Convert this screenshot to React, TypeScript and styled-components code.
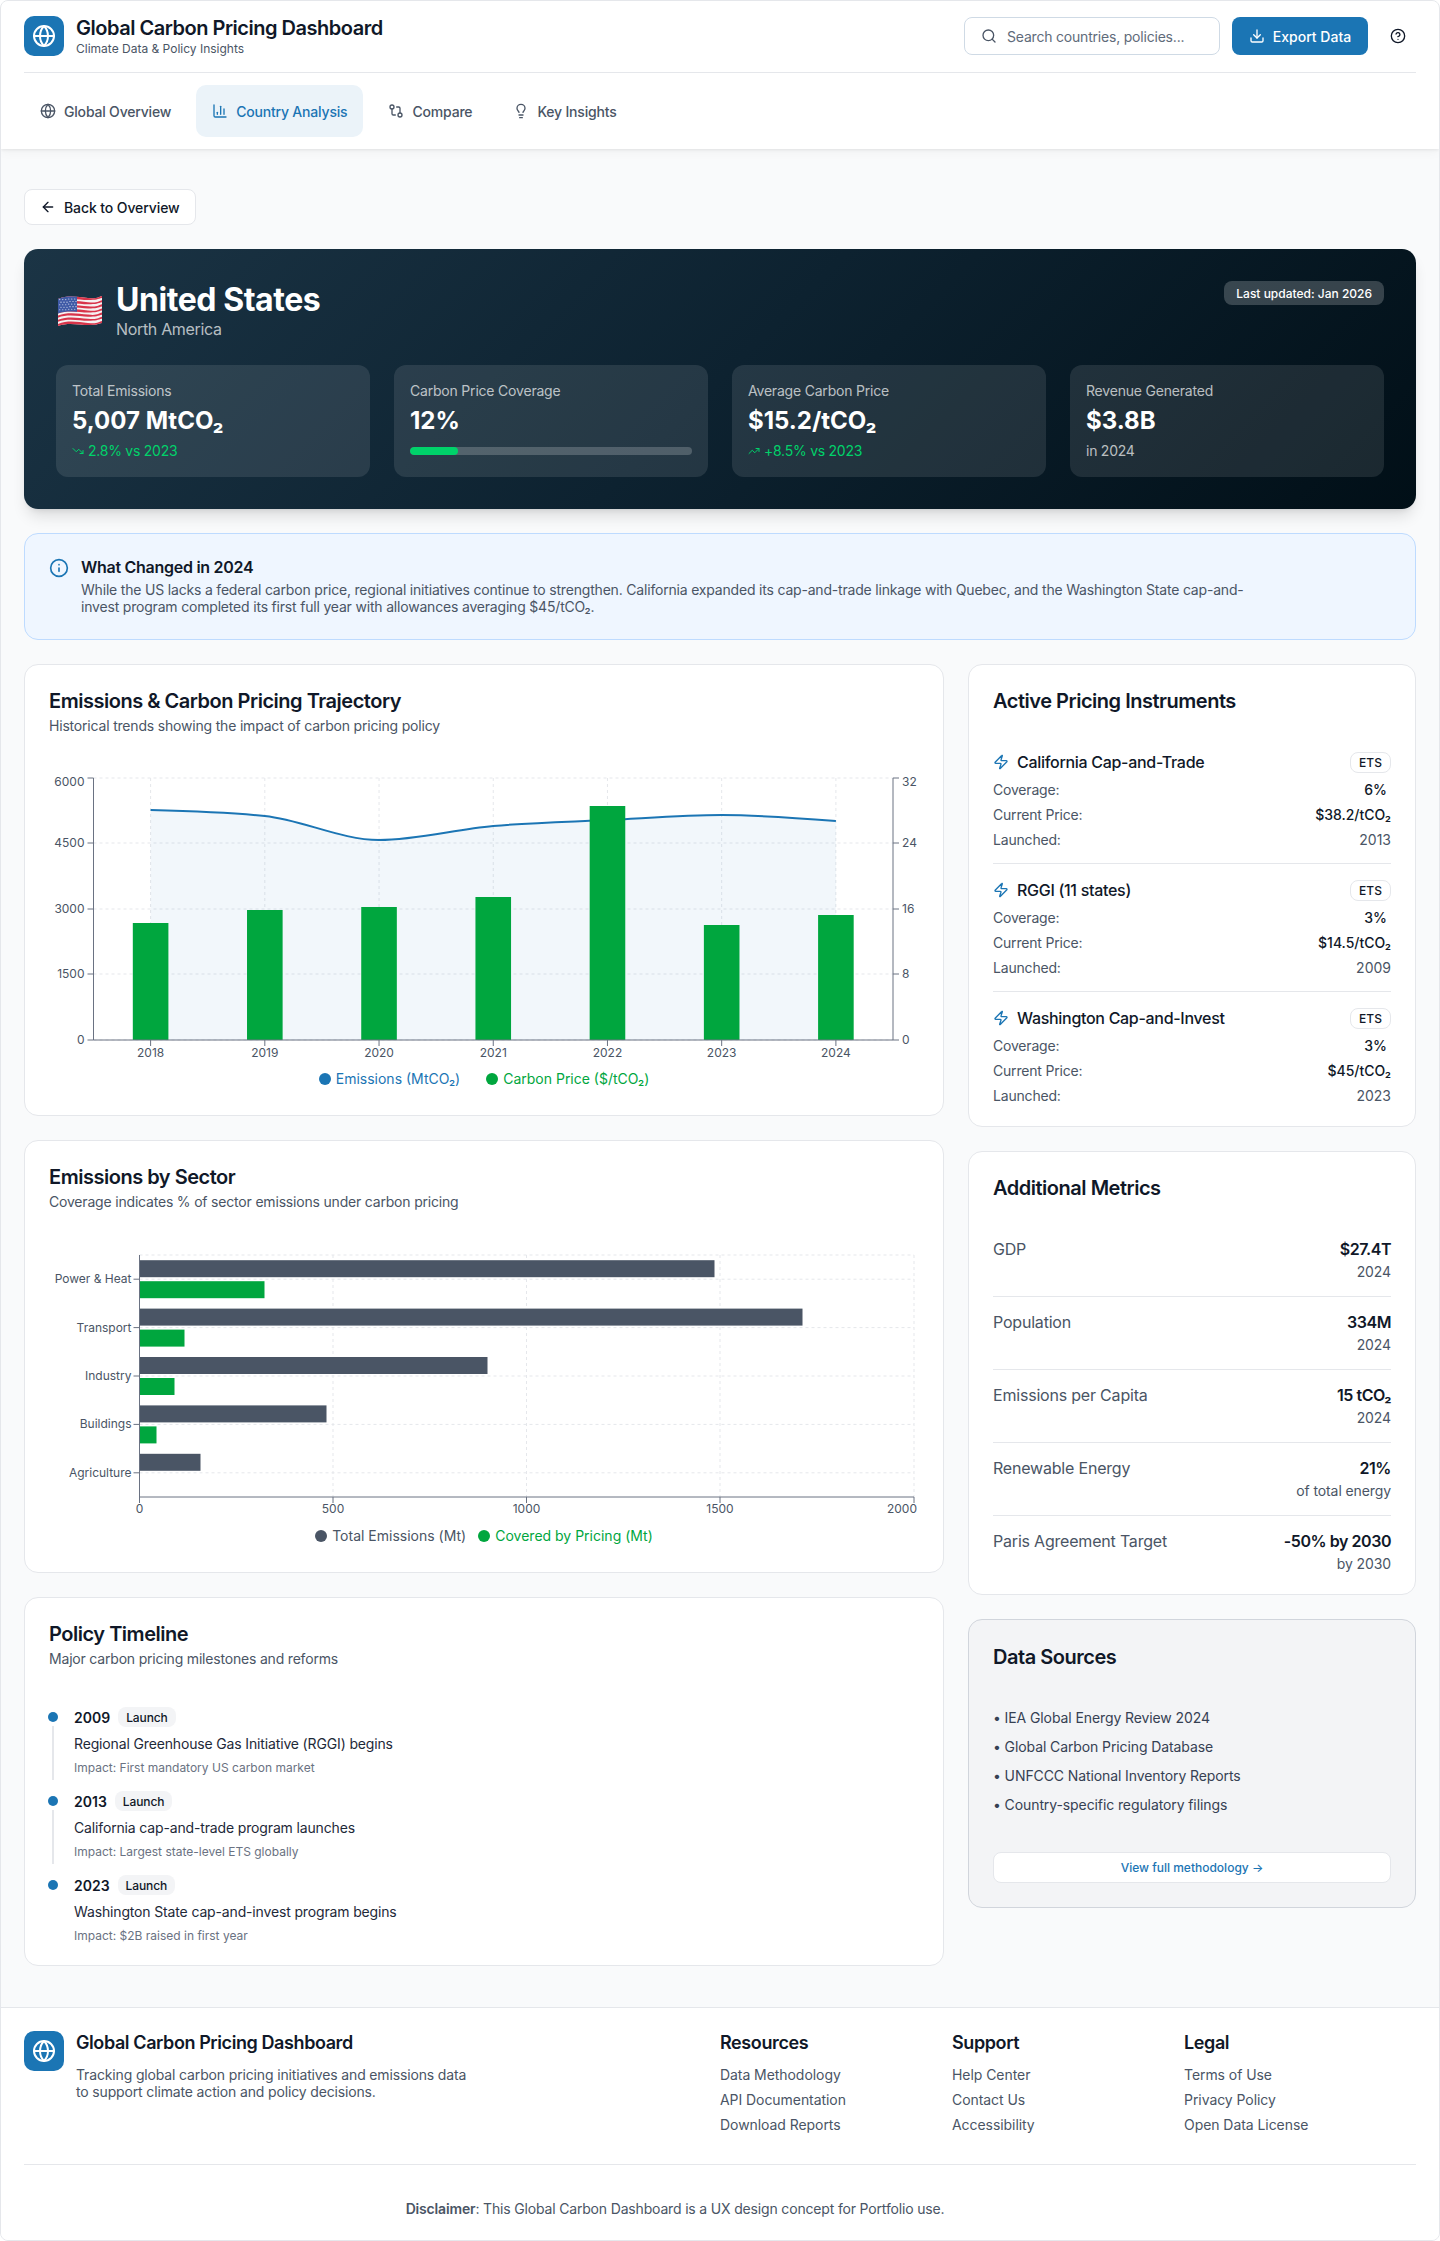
import React from "react";
import styled, { createGlobalStyle } from "styled-components";
import {
  ArrowLeft,
  ChartColumn,
  CircleHelp,
  Download,
  GitCompare,
  Globe,
  Info,
  Lightbulb,
  Search,
  TrendingDown,
  TrendingUp,
  Zap,
} from "lucide-react";

const PRIMARY = "#1b75b4";
const GREEN = "#00a63e";
const SLATE = "#4a5565";
const AXIS = "#6a7282";
const GRID = "#e5e7eb";

const GlobalStyle = createGlobalStyle`
  html, body { margin: 0; padding: 0; background: #fff; }
  * { box-sizing: border-box; }
  body {
    font-family: Inter, "Liberation Sans", sans-serif;
    color: #101828;
  }
`;

const Root = styled.div`
  border: 1px solid #e5e7eb;
  border-radius: 8px;
  overflow: hidden;
  background: #f9fafb;
`;

const Header = styled.header`
  position: relative;
  z-index: 2;
  background: #fff;
  padding: 15px 23px 0;
  box-shadow: 0 1px 3px rgba(0, 0, 0, 0.08), 0 4px 10px rgba(0, 0, 0, 0.03);
`;

const TopRow = styled.div`
  display: flex;
  justify-content: space-between;
  align-items: center;
  padding-bottom: 16px;
  border-bottom: 1px solid #e5e7eb;
`;

const Brand = styled.div`
  display: flex;
  gap: 12px;
`;

const LogoMark = styled.div`
  width: 40px;
  height: 40px;
  border-radius: 10px;
  background: ${PRIMARY};
  color: #fff;
  display: flex;
  align-items: center;
  justify-content: center;
  flex: none;
`;

const BrandTitle = styled.div`
  font-size: 20px;
  line-height: 24px;
  font-weight: 600;
  letter-spacing: -0.48px;
  color: #101828;
`;

const BrandSub = styled.div`
  margin-top: 1px;
  font-size: 12px;
  line-height: 15px;
  color: ${SLATE};
`;

const Actions = styled.div`
  display: flex;
  align-items: center;
  gap: 12px;
`;

const SearchBox = styled.label`
  width: 256px;
  height: 38px;
  display: flex;
  align-items: center;
  gap: 10px;
  padding: 0 16px;
  background: #fff;
  border: 1px solid #cfdae5;
  border-radius: 8px;
  color: ${SLATE};
`;

const SearchInput = styled.input`
  flex: 1;
  min-width: 0;
  border: 0;
  outline: 0;
  padding: 0;
  background: transparent;
  font: 400 14px Inter, "Liberation Sans", sans-serif;
  letter-spacing: -0.2px;
  &::placeholder { color: #5f6b7a; opacity: 1; }
`;

const ExportButton = styled.button`
  width: 136px;
  height: 38px;
  display: flex;
  align-items: center;
  justify-content: center;
  gap: 8px;
  border: 0;
  border-radius: 8px;
  background: ${PRIMARY};
  color: #fff;
  font: 500 14px Inter, "Liberation Sans", sans-serif;
`;

const IconButton = styled.button`
  width: 36px;
  height: 36px;
  display: flex;
  align-items: center;
  justify-content: center;
  border: 0;
  padding: 0;
  background: transparent;
  color: #101828;
`;

const Nav = styled.nav`
  display: flex;
  gap: 9px;
  padding: 12px 0;
`;

const Tab = styled.a<{ $active?: boolean }>`
  height: 52px;
  display: flex;
  align-items: center;
  gap: 8px;
  padding: 0 16px;
  border-radius: 10px;
  font-size: 14px;
  font-weight: 500;
  letter-spacing: -0.19px;
  background: ${(p) => (p.$active ? "#ebf3f9" : "transparent")};
  color: ${(p) => (p.$active ? PRIMARY : SLATE)};
`;

const Main = styled.main`
  padding: 40px 23px 41px;
  display: flex;
  flex-direction: column;
  align-items: stretch;
  gap: 24px;
`;

const BackButton = styled.button`
  align-self: flex-start;
  width: 172px;
  height: 36px;
  display: flex;
  align-items: center;
  gap: 8px;
  padding: 0 15px;
  white-space: nowrap;
  background: #fff;
  border: 1px solid #e5e7eb;
  border-radius: 8px;
  color: #101828;
  font: 500 14px Inter, "Liberation Sans", sans-serif;
  letter-spacing: -0.1px;
`;

const Hero = styled.section`
  height: 260px;
  padding: 32px;
  border-radius: 14px;
  color: #fff;
  background: linear-gradient(135deg, #1b3445 0%, #0d2230 50%, #010f17 100%);
  box-shadow: 0 10px 15px -3px rgba(0, 0, 0, 0.12), 0 4px 6px -4px rgba(0, 0, 0, 0.12);
`;

const HeroHead = styled.div`
  display: flex;
  justify-content: space-between;
  align-items: flex-start;
  margin-bottom: 26px;
`;

const HeroTitleGroup = styled.div`
  display: flex;
  align-items: center;
  gap: 12px;
`;

const FlagSlot = styled.div`
  width: 48px;
  height: 31px;
  padding-left: 2px;
  margin-top: 3px;
`;

const HeroTitle = styled.h1`
  margin: 0;
  padding-top: 3px;
  font-size: 32px;
  line-height: 32px;
  font-weight: 700;
  letter-spacing: -0.44px;
`;

const HeroSub = styled.div`
  margin-top: 3px;
  font-size: 16px;
  line-height: 20px;
  letter-spacing: -0.33px;
  color: rgba(255, 255, 255, 0.7);
`;

const UpdatedBadge = styled.div`
  height: 24px;
  display: flex;
  align-items: center;
  padding: 0 12px;
  border-radius: 8px;
  font-size: 12px;
  font-weight: 500;
  background: rgba(255, 255, 255, 0.2);
`;

const StatGrid = styled.div`
  display: grid;
  grid-template-columns: repeat(4, 1fr);
  gap: 24px;
`;

const StatCard = styled.div`
  height: 112px;
  padding: 16px;
  border-radius: 12px;
  background: rgba(255, 255, 255, 0.1);
`;

const StatLabel = styled.div`
  font-size: 14px;
  line-height: 20px;
  letter-spacing: -0.2px;
  color: rgba(255, 255, 255, 0.7);
`;

const StatValue = styled.div`
  margin-top: 4px;
  font-size: 24px;
  line-height: 32px;
  font-weight: 700;
`;

const StatNote = styled.div<{ $positive?: boolean }>`
  margin-top: 4px;
  display: flex;
  align-items: center;
  gap: 4px;
  font-size: 14px;
  line-height: 20px;
  letter-spacing: -0.25px;
  color: ${(p) => (p.$positive ? "#00d26a" : "rgba(255, 255, 255, 0.7)")};
`;

const ProgressTrack = styled.div`
  margin-top: 10px;
  height: 8px;
  border-radius: 4px;
  overflow: hidden;
  background: rgba(255, 255, 255, 0.2);
`;

const ProgressFill = styled.div`
  height: 100%;
  border-radius: 4px;
  background: #00d26a;
`;

const InfoBox = styled.section`
  display: flex;
  gap: 12px;
  padding: 24px;
  background: #eff6ff;
  border: 1px solid #bedbff;
  border-radius: 14px;
  color: ${PRIMARY};
`;

const InfoTitle = styled.div`
  font-size: 16px;
  line-height: 19px;
  font-weight: 600;
  letter-spacing: -0.28px;
  color: #101828;
`;

const InfoText = styled.p`
  margin: 4px 0 0;
  max-width: 1180px;
  font-size: 14px;
  line-height: 17px;
  letter-spacing: -0.19px;
  color: ${SLATE};
`;

const ContentGrid = styled.div`
  display: grid;
  grid-template-columns: minmax(0, 1fr) 448px;
  gap: 24px;
  align-items: start;
`;

const Column = styled.div`
  display: flex;
  flex-direction: column;
  gap: 24px;
`;

const Card = styled.section<{ $muted?: boolean; $tight?: boolean }>`
  padding: ${(p) => (p.$muted ? "25px" : "24px")} 24px ${(p) => (p.$tight ? "22px" : "24px")};
  background: ${(p) => (p.$muted ? "#f3f4f6" : "#fff")};
  border: 1px solid ${(p) => (p.$muted ? "#d1d5dc" : "#e5e7eb")};
  border-radius: 14px;
`;

const CardTitle = styled.h2`
  margin: 0;
  font-size: 20px;
  line-height: 24px;
  font-weight: 600;
  letter-spacing: -0.48px;
  color: #101828;
`;

const CardSub = styled.p`
  margin: 4px 0 0;
  font-size: 14px;
  line-height: 17px;
  letter-spacing: -0.19px;
  color: ${SLATE};
`;

const ChartFrame = styled.div<{ $height: number }>`
  height: ${(p) => p.$height}px;
  margin-top: 24px;
`;

const ChartSvg = styled.svg`
  display: block;
`;

const AxisLabel = styled.text`
  font-family: Inter, "Liberation Sans", sans-serif;
  font-size: 12px;
  fill: ${SLATE};
`;

const Legend = styled.div<{ $gap: number; $top: number }>`
  display: flex;
  justify-content: center;
  gap: ${(p) => p.$gap}px;
  margin-top: ${(p) => p.$top}px;
`;

const LegendItem = styled.div<{ $color: string }>`
  display: flex;
  align-items: center;
  gap: 5px;
  font-size: 14px;
  line-height: 17px;
  color: ${(p) => p.$color};
`;

const LegendDot = styled.span<{ $color: string }>`
  width: 12px;
  height: 12px;
  border-radius: 50%;
  background: ${(p) => p.$color};
`;

const Timeline = styled.div`
  margin-top: 40px;
`;

const TimelineItem = styled.div<{ $last?: boolean }>`
  display: flex;
  gap: 16px;
  padding-bottom: ${(p) => (p.$last ? 0 : 16)}px;
`;

const Rail = styled.div`
  width: 10px;
  margin-left: -1px;
  padding-top: 5px;
  display: flex;
  flex-direction: column;
  align-items: center;
  flex: none;
`;

const RailDot = styled.span`
  width: 10px;
  height: 10px;
  border-radius: 50%;
  background: ${PRIMARY};
  flex: none;
`;

const RailLine = styled.span`
  flex: 1;
  width: 2px;
  margin: 4px 0 -5px;
  background: #e5e7eb;
`;

const TimelineHead = styled.div`
  display: flex;
  align-items: center;
  gap: 8px;
  height: 20px;
`;

const TimelineYear = styled.span`
  font-size: 14px;
  font-weight: 600;
  color: #101828;
`;

const TimelineBadge = styled.span`
  height: 20px;
  display: flex;
  align-items: center;
  padding: 0 8px;
  border-radius: 8px;
  background: #f3f4f6;
  font-size: 12px;
  font-weight: 500;
  letter-spacing: -0.1px;
  color: #101828;
`;

const TimelineText = styled.div`
  margin-top: 8px;
  font-size: 14px;
  line-height: 17px;
  letter-spacing: -0.15px;
  color: #1e2939;
`;

const TimelineImpact = styled.div`
  margin-top: 8px;
  font-size: 12px;
  line-height: 15px;
  color: #6a7282;
`;

const Instruments = styled.div`
  margin-top: 39px;
`;

const Instrument = styled.div<{ $last?: boolean }>`
  display: flex;
  flex-direction: column;
  gap: 8px;
  padding-bottom: ${(p) => (p.$last ? 0 : 15)}px;
  margin-bottom: ${(p) => (p.$last ? 0 : 16)}px;
  border-bottom: ${(p) => (p.$last ? "0" : "1px solid #e5e7eb")};
`;

const InstrumentHead = styled.div`
  display: flex;
  justify-content: space-between;
  align-items: center;
  height: 21px;
`;

const InstrumentName = styled.div`
  display: flex;
  align-items: center;
  gap: 8px;
  margin-top: -2px;
  font-size: 16px;
  font-weight: 500;
  letter-spacing: -0.3px;
  color: #101828;
  svg { color: ${PRIMARY}; }
`;

const TypeBadge = styled.span`
  height: 21px;
  width: 41px;
  display: flex;
  align-items: center;
  justify-content: center;
  border: 1px solid #e5e7eb;
  border-radius: 8px;
  font-size: 12px;
  font-weight: 500;
  color: #101828;
`;

const SpecRow = styled.div`
  display: flex;
  justify-content: space-between;
  font-size: 14px;
  line-height: 17px;
  letter-spacing: -0.19px;
  color: ${SLATE};
`;

const SpecValue = styled.span<{ $strong?: boolean; $inset?: boolean }>`
  font-weight: ${(p) => (p.$strong ? 500 : 400)};
  letter-spacing: 0;
  color: ${(p) => (p.$strong ? "#101828" : SLATE)};
  padding-right: ${(p) => (p.$inset ? 4 : 0)}px;
`;

const Metrics = styled.div`
  margin-top: 40px;
`;

const Metric = styled.div<{ $last?: boolean }>`
  display: flex;
  justify-content: space-between;
  align-items: flex-start;
  padding-bottom: ${(p) => (p.$last ? 0 : 16)}px;
  margin-bottom: ${(p) => (p.$last ? 0 : 16)}px;
  border-bottom: ${(p) => (p.$last ? "0" : "1px solid #e5e7eb")};
`;

const MetricLabel = styled.div`
  font-size: 16px;
  line-height: 19px;
  letter-spacing: -0.2px;
  color: ${SLATE};
`;

const MetricRight = styled.div`
  text-align: right;
`;

const MetricValue = styled.div`
  font-size: 16px;
  line-height: 19px;
  font-weight: 600;
  letter-spacing: -0.45px;
  color: #101828;
`;

const MetricNote = styled.div`
  margin-top: 4px;
  font-size: 14px;
  line-height: 17px;
  letter-spacing: -0.1px;
  color: ${SLATE};
`;

const SourceList = styled.ul`
  list-style: none;
  margin: 40px 0 39px;
  padding: 0;
  display: flex;
  flex-direction: column;
  gap: 12px;
`;

const SourceItem = styled.li`
  font-size: 14px;
  line-height: 17px;
  letter-spacing: -0.1px;
  color: #364153;
`;

const MethodButton = styled.button`
  width: 100%;
  height: 31px;
  background: #fff;
  border: 1px solid #e5e7eb;
  border-radius: 8px;
  color: ${PRIMARY};
  font: 500 12px Inter, "Liberation Sans", sans-serif;
`;

const Footer = styled.footer`
  background: #fff;
  border-top: 1px solid #e5e7eb;
  padding: 23px 23px 23px;
`;

const FooterGrid = styled.div`
  display: grid;
  grid-template-columns: 3fr 1fr 1fr 1fr;
  padding-bottom: 31px;
  border-bottom: 1px solid #e5e7eb;
`;

const FooterBrandTitle = styled.div`
  font-size: 18px;
  line-height: 24px;
  font-weight: 600;
  letter-spacing: -0.41px;
  color: #101828;
`;

const FooterBrandText = styled.p`
  margin: 11px 0 0;
  max-width: 400px;
  font-size: 14px;
  line-height: 17px;
  letter-spacing: -0.15px;
  color: ${SLATE};
`;

const FooterHeading = styled.div`
  font-size: 18px;
  line-height: 24px;
  font-weight: 600;
  letter-spacing: -0.4px;
  color: #101828;
`;

const FooterLinks = styled.div`
  margin-top: 11px;
  display: flex;
  flex-direction: column;
  gap: 8px;
`;

const FooterLink = styled.a`
  font-size: 14px;
  line-height: 17px;
  letter-spacing: -0.06px;
  color: ${SLATE};
`;

const Disclaimer = styled.div`
  padding: 35px 90px 0 0;
  text-align: center;
  font-size: 14px;
  line-height: 17px;
  letter-spacing: -0.17px;
  color: ${SLATE};
  strong { font-weight: 600; }
`;

type Pt = [number, number];

function monotonePath(points: Pt[]): string {
  const n = points.length;
  const t: number[] = new Array(n).fill(0);
  const sign = (v: number) => (v < 0 ? -1 : 1);
  for (let i = 1; i < n - 1; i++) {
    const h0 = points[i][0] - points[i - 1][0];
    const h1 = points[i + 1][0] - points[i][0];
    const s0 = (points[i][1] - points[i - 1][1]) / h0;
    const s1 = (points[i + 1][1] - points[i][1]) / h1;
    const p = (s0 * h1 + s1 * h0) / (h0 + h1);
    t[i] = (sign(s0) + sign(s1)) * Math.min(Math.abs(s0), Math.abs(s1), 0.5 * Math.abs(p)) || 0;
  }
  const h = points[1][0] - points[0][0];
  t[0] = ((3 * (points[1][1] - points[0][1])) / h - t[1]) / 2;
  const he = points[n - 1][0] - points[n - 2][0];
  t[n - 1] = ((3 * (points[n - 1][1] - points[n - 2][1])) / he - t[n - 2]) / 2;
  let d = `M${points[0][0]},${points[0][1]}`;
  for (let i = 0; i < n - 1; i++) {
    const dx = (points[i + 1][0] - points[i][0]) / 3;
    d += `C${points[i][0] + dx},${points[i][1] + dx * t[i]},${points[i + 1][0] - dx},${
      points[i + 1][1] - dx * t[i + 1]
    },${points[i + 1][0]},${points[i + 1][1]}`;
  }
  return d;
}

const YEARS = [2018, 2019, 2020, 2021, 2022, 2023, 2024];
const X0 = 44.5;
const X1 = 844;
const TOP = 20;
const BASE = 282;
const catX = (i: number) => X0 + ((X1 - X0) / 7) * (i + 0.5);
const LINE_Y = [52, 58, 82, 68, 62, 57, 63];
const BAR_TOP = [165, 152, 149, 139, 48, 167, 157];
const LEFT_TICKS: [string, number][] = [["6000", TOP], ["4500", 85], ["3000", 151], ["1500", 216], ["0", BASE]];
const RIGHT_TICKS: [string, number][] = [["32", TOP], ["24", 85], ["16", 151], ["8", 216], ["0", BASE]];

function TrajectoryChart() {
  const line = monotonePath(YEARS.map((_, i) => [catX(i), LINE_Y[i]] as Pt));
  const area = `${line}L${catX(6)},${BASE}L${catX(0)},${BASE}Z`;
  return (
    <ChartSvg width={870} height={306} viewBox="0 0 870 306">
      {LEFT_TICKS.map(([, y]) => (
        <line key={y} x1={X0} x2={X1} y1={y} y2={y} stroke={GRID} strokeDasharray="3 3" />
      ))}
      {YEARS.map((_, i) => (
        <line key={i} x1={catX(i)} x2={catX(i)} y1={TOP} y2={BASE} stroke={GRID} strokeDasharray="3 3" />
      ))}
      <path d={area} fill={PRIMARY} fillOpacity={0.06} />
      <path d={line} fill="none" stroke={PRIMARY} strokeWidth={2} />
      {YEARS.map((_, i) => (
        <rect key={i} x={catX(i) - 17.8} y={BAR_TOP[i]} width={35.6} height={BASE - BAR_TOP[i]} fill={GREEN} />
      ))}
      <line x1={X0} x2={X0} y1={TOP} y2={BASE} stroke={AXIS} />
      <line x1={X1} x2={X1} y1={TOP} y2={BASE} stroke={AXIS} />
      <line x1={X0} x2={X1} y1={BASE} y2={BASE} stroke={AXIS} />
      {LEFT_TICKS.map(([t, y], i) => (
        <g key={t}>
          <line x1={X0 - 6} x2={X0} y1={y} y2={y} stroke={AXIS} />
          <AxisLabel x={X0 - 9} y={(i === 0 ? y + 4 : y) + 4} textAnchor="end">{t}</AxisLabel>
        </g>
      ))}
      {RIGHT_TICKS.map(([t, y], i) => (
        <g key={t + y}>
          <line x1={X1} x2={X1 + 6} y1={y} y2={y} stroke={AXIS} />
          <AxisLabel x={X1 + 9} y={(i === 0 ? y + 4 : y) + 4}>{t}</AxisLabel>
        </g>
      ))}
      {YEARS.map((yr, i) => (
        <g key={yr}>
          <line x1={catX(i)} x2={catX(i)} y1={BASE} y2={BASE + 6} stroke={AXIS} />
          <AxisLabel x={catX(i)} y={BASE + 17} textAnchor="middle">{yr}</AxisLabel>
        </g>
      ))}
    </ChartSvg>
  );
}

const S_LEFT = 90.5;
const S_RIGHT = 865;
const S_TOP = 21;
const S_BASE = 263;
const SECTORS: { name: string; total: number; covered: number }[] = [
  { name: "Power & Heat", total: 575, covered: 125 },
  { name: "Transport", total: 663, covered: 45 },
  { name: "Industry", total: 348, covered: 35 },
  { name: "Buildings", total: 187, covered: 17 },
  { name: "Agriculture", total: 61, covered: 0 },
];
const sectorY = (i: number) => S_TOP + ((S_BASE - S_TOP) / 5) * (i + 0.5);
const X_TICKS: [string, number][] = [["0", 90.5], ["500", 284], ["1000", 477.5], ["1500", 671], ["2000", 865]];

function SectorChart() {
  return (
    <ChartSvg width={870} height={284} viewBox="0 0 870 284">
      <line x1={S_LEFT} x2={S_RIGHT} y1={S_TOP} y2={S_TOP} stroke={GRID} strokeDasharray="3 3" />
      {SECTORS.map((_, i) => (
        <line key={i} x1={S_LEFT} x2={S_RIGHT} y1={sectorY(i)} y2={sectorY(i)} stroke={GRID} strokeDasharray="3 3" />
      ))}
      {X_TICKS.slice(1).map(([t, x]) => (
        <line key={t} x1={x} x2={x} y1={S_TOP} y2={S_BASE} stroke={GRID} strokeDasharray="3 3" />
      ))}
      {SECTORS.map((s, i) => (
        <g key={s.name}>
          <rect x={S_LEFT} y={sectorY(i) - 19} width={s.total} height={17} fill={SLATE} />
          {s.covered > 0 && <rect x={S_LEFT} y={sectorY(i) + 2} width={s.covered} height={17} fill={GREEN} />}
          <line x1={S_LEFT - 6} x2={S_LEFT} y1={sectorY(i)} y2={sectorY(i)} stroke={AXIS} />
          <AxisLabel x={S_LEFT - 8} y={sectorY(i) + 4} textAnchor="end">{s.name}</AxisLabel>
        </g>
      ))}
      <line x1={S_LEFT} x2={S_LEFT} y1={S_TOP} y2={S_BASE} stroke={AXIS} />
      <line x1={S_LEFT} x2={S_RIGHT} y1={S_BASE} y2={S_BASE} stroke={AXIS} />
      {X_TICKS.map(([t, x], i) => (
        <g key={t}>
          <line x1={x} x2={x} y1={S_BASE} y2={S_BASE + 6} stroke={AXIS} />
          <AxisLabel x={i === 4 ? x + 3 : x} y={S_BASE + 16} textAnchor={i === 4 ? "end" : "middle"}>{t}</AxisLabel>
        </g>
      ))}
    </ChartSvg>
  );
}

function waveEdge(y: number) {
  return `C10 ${y - 1} 20 ${y + 1} 30 ${y + 2}S40 ${y + 1} 44 ${y}`;
}
function waveBack(y: number) {
  return `C40 ${y + 1} 38 ${y + 2} 30 ${y + 2}S10 ${y - 1} 0 ${y + 3}`;
}

function FlagIcon() {
  const h = 27 / 13;
  const band = (a: number, b: number) => `M0 ${a + 3}${waveEdge(a)}L44 ${b}${waveBack(b)}Z`;
  const stars: Pt[] = [];
  for (let r = 0; r < 5; r++) {
    for (let c = 0; c < 6; c++) {
      const x = 1.8 + c * 3 + (r % 2 ? 1.2 : 0);
      stars.push([x, 3.6 + r * 2.55 + (x < 10 ? 0 : -0.6)]);
    }
  }
  return (
    <svg width={44} height={31} viewBox="0 0 44 31" aria-hidden="true">
      <defs>
        <clipPath id="flag-canton">
          <rect x={0} y={0} width={19} height={31} />
        </clipPath>
      </defs>
      <path d={band(0, 27)} fill="#f5f1f1" />
      {Array.from({ length: 7 }).map((_, i) => (
        <path key={i} d={band(i * 2 * h, i * 2 * h + h)} fill="#d8344a" />
      ))}
      <path d={band(0, 7 * h)} fill="#3f5aa6" clipPath="url(#flag-canton)" />
      {stars.map(([x, y], i) => (
        <circle key={i} cx={x} cy={y} r={0.55} fill="#e8ecf8" />
      ))}
    </svg>
  );
}

const INSTRUMENTS = [
  { name: "California Cap-and-Trade", coverage: "6%", price: "$38.2/tCO₂", year: "2013" },
  { name: "RGGI (11 states)", coverage: "3%", price: "$14.5/tCO₂", year: "2009" },
  { name: "Washington Cap-and-Invest", coverage: "3%", price: "$45/tCO₂", year: "2023" },
];

const METRICS = [
  { label: "GDP", value: "$27.4T", note: "2024" },
  { label: "Population", value: "334M", note: "2024" },
  { label: "Emissions per Capita", value: "15 tCO₂", note: "2024" },
  { label: "Renewable Energy", value: "21%", note: "of total energy" },
  { label: "Paris Agreement Target", value: "-50% by 2030", note: "by 2030" },
];

const EVENTS = [
  { year: "2009", text: "Regional Greenhouse Gas Initiative (RGGI) begins", impact: "Impact: First mandatory US carbon market" },
  { year: "2013", text: "California cap-and-trade program launches", impact: "Impact: Largest state-level ETS globally" },
  { year: "2023", text: "Washington State cap-and-invest program begins", impact: "Impact: $2B raised in first year" },
];

const FOOTER_COLUMNS = [
  { title: "Resources", links: ["Data Methodology", "API Documentation", "Download Reports"] },
  { title: "Support", links: ["Help Center", "Contact Us", "Accessibility"] },
  { title: "Legal", links: ["Terms of Use", "Privacy Policy", "Open Data License"] },
];

export default function App() {
  return (
    <Root>
      <GlobalStyle />
      <Header>
        <TopRow>
          <Brand>
            <LogoMark><Globe size={24} /></LogoMark>
            <div>
              <BrandTitle>Global Carbon Pricing Dashboard</BrandTitle>
              <BrandSub>Climate Data &amp; Policy Insights</BrandSub>
            </div>
          </Brand>
          <Actions>
            <SearchBox>
              <Search size={16} />
              <SearchInput placeholder="Search countries, policies..." />
            </SearchBox>
            <ExportButton><Download size={16} />Export Data</ExportButton>
            <IconButton aria-label="Help"><CircleHelp size={16} /></IconButton>
          </Actions>
        </TopRow>
        <Nav>
          <Tab><Globe size={16} />Global Overview</Tab>
          <Tab $active><ChartColumn size={16} />Country Analysis</Tab>
          <Tab><GitCompare size={16} />Compare</Tab>
          <Tab><Lightbulb size={16} />Key Insights</Tab>
        </Nav>
      </Header>

      <Main>
        <BackButton><ArrowLeft size={16} />Back to Overview</BackButton>

        <Hero>
          <HeroHead>
            <HeroTitleGroup>
              <FlagSlot><FlagIcon /></FlagSlot>
              <div>
                <HeroTitle>United States</HeroTitle>
                <HeroSub>North America</HeroSub>
              </div>
            </HeroTitleGroup>
            <UpdatedBadge>Last updated: Jan 2026</UpdatedBadge>
          </HeroHead>
          <StatGrid>
            <StatCard>
              <StatLabel>Total Emissions</StatLabel>
              <StatValue>5,007 MtCO₂</StatValue>
              <StatNote $positive><TrendingDown size={12} />2.8% vs 2023</StatNote>
            </StatCard>
            <StatCard>
              <StatLabel>Carbon Price Coverage</StatLabel>
              <StatValue>12%</StatValue>
              <ProgressTrack><ProgressFill style={{ width: "17%" }} /></ProgressTrack>
            </StatCard>
            <StatCard>
              <StatLabel>Average Carbon Price</StatLabel>
              <StatValue>$15.2/tCO₂</StatValue>
              <StatNote $positive><TrendingUp size={12} />+8.5% vs 2023</StatNote>
            </StatCard>
            <StatCard>
              <StatLabel>Revenue Generated</StatLabel>
              <StatValue>$3.8B</StatValue>
              <StatNote>in 2024</StatNote>
            </StatCard>
          </StatGrid>
        </Hero>

        <InfoBox>
          <Info size={20} />
          <div>
            <InfoTitle>What Changed in 2024</InfoTitle>
            <InfoText>
              While the US lacks a federal carbon price, regional initiatives continue to strengthen. California expanded its cap-and-trade linkage with Quebec, and the Washington State cap-and-invest program completed its first full year with allowances averaging $45/tCO₂.
            </InfoText>
          </div>
        </InfoBox>

        <ContentGrid>
          <Column>
            <Card>
              <CardTitle>Emissions &amp; Carbon Pricing Trajectory</CardTitle>
              <CardSub>Historical trends showing the impact of carbon pricing policy</CardSub>
              <ChartFrame $height={333}>
                <TrajectoryChart />
                <Legend $gap={26} $top={6}>
                  <LegendItem $color={PRIMARY}><LegendDot $color={PRIMARY} />Emissions (MtCO₂)</LegendItem>
                  <LegendItem $color={GREEN}><LegendDot $color={GREEN} />Carbon Price ($/tCO₂)</LegendItem>
                </Legend>
              </ChartFrame>
            </Card>

            <Card>
              <CardTitle>Emissions by Sector</CardTitle>
              <CardSub>Coverage indicates % of sector emissions under carbon pricing</CardSub>
              <ChartFrame $height={314}>
                <SectorChart />
                <Legend $gap={12} $top={9}>
                  <LegendItem $color={SLATE}><LegendDot $color={SLATE} />Total Emissions (Mt)</LegendItem>
                  <LegendItem $color={GREEN}><LegendDot $color={GREEN} />Covered by Pricing (Mt)</LegendItem>
                </Legend>
              </ChartFrame>
            </Card>

            <Card $tight>
              <CardTitle>Policy Timeline</CardTitle>
              <CardSub>Major carbon pricing milestones and reforms</CardSub>
              <Timeline>
                {EVENTS.map((e, i) => (
                  <TimelineItem key={e.year} $last={i === EVENTS.length - 1}>
                    <Rail>
                      <RailDot />
                      {i < EVENTS.length - 1 && <RailLine />}
                    </Rail>
                    <div>
                      <TimelineHead>
                        <TimelineYear>{e.year}</TimelineYear>
                        <TimelineBadge>Launch</TimelineBadge>
                      </TimelineHead>
                      <TimelineText>{e.text}</TimelineText>
                      <TimelineImpact>{e.impact}</TimelineImpact>
                    </div>
                  </TimelineItem>
                ))}
              </Timeline>
            </Card>
          </Column>

          <Column>
            <Card $tight>
              <CardTitle>Active Pricing Instruments</CardTitle>
              <Instruments>
                {INSTRUMENTS.map((it, i) => (
                  <Instrument key={it.name} $last={i === INSTRUMENTS.length - 1}>
                    <InstrumentHead>
                      <InstrumentName><Zap size={16} />{it.name}</InstrumentName>
                      <TypeBadge>ETS</TypeBadge>
                    </InstrumentHead>
                    <SpecRow>Coverage:<SpecValue $strong $inset>{it.coverage}</SpecValue></SpecRow>
                    <SpecRow>Current Price:<SpecValue $strong>{it.price}</SpecValue></SpecRow>
                    <SpecRow>Launched:<SpecValue>{it.year}</SpecValue></SpecRow>
                  </Instrument>
                ))}
              </Instruments>
            </Card>

            <Card $tight>
              <CardTitle>Additional Metrics</CardTitle>
              <Metrics>
                {METRICS.map((m, i) => (
                  <Metric key={m.label} $last={i === METRICS.length - 1}>
                    <MetricLabel>{m.label}</MetricLabel>
                    <MetricRight>
                      <MetricValue>{m.value}</MetricValue>
                      <MetricNote>{m.note}</MetricNote>
                    </MetricRight>
                  </Metric>
                ))}
              </Metrics>
            </Card>

            <Card $muted>
              <CardTitle>Data Sources</CardTitle>
              <SourceList>
                <SourceItem>• IEA Global Energy Review 2024</SourceItem>
                <SourceItem>• Global Carbon Pricing Database</SourceItem>
                <SourceItem>• UNFCCC National Inventory Reports</SourceItem>
                <SourceItem>• Country-specific regulatory filings</SourceItem>
              </SourceList>
              <MethodButton>View full methodology →</MethodButton>
            </Card>
          </Column>
        </ContentGrid>
      </Main>

      <Footer>
        <FooterGrid>
          <Brand>
            <LogoMark><Globe size={24} /></LogoMark>
            <div>
              <FooterBrandTitle>Global Carbon Pricing Dashboard</FooterBrandTitle>
              <FooterBrandText>
                Tracking global carbon pricing initiatives and emissions data to support climate action and policy decisions.
              </FooterBrandText>
            </div>
          </Brand>
          {FOOTER_COLUMNS.map((col) => (
            <div key={col.title}>
              <FooterHeading>{col.title}</FooterHeading>
              <FooterLinks>
                {col.links.map((l) => (
                  <FooterLink key={l}>{l}</FooterLink>
                ))}
              </FooterLinks>
            </div>
          ))}
        </FooterGrid>
        <Disclaimer>
          <strong>Disclaimer</strong>: This Global Carbon Dashboard is a UX design concept for Portfolio use.
        </Disclaimer>
      </Footer>
    </Root>
  );
}
